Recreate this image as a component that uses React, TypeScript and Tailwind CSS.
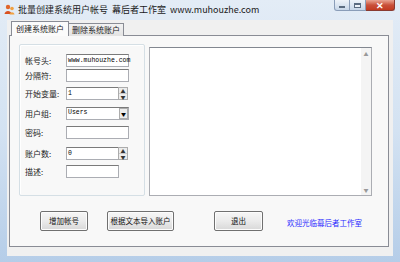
import { ReactNode } from "react";

const ui = { fontFamily: '"Noto Sans CJK SC", "Noto Sans", sans-serif' };
const mono = { fontFamily: '"Liberation Mono", "DejaVu Sans Mono", monospace' };

function Field({ className = "", value = "" }: { className?: string; value?: string }) {
  return (
    <div
      className={`h-[13px] bg-white border border-[#abadb3] border-t-[#7a7a7a] text-[6.5px] leading-[11px] pl-[1px] text-black ${className}`}
      style={mono}
    >
      {value}
    </div>
  );
}

function Spinner({ value }: { value: string }) {
  return (
    <div className="flex h-[13px] w-[63px]">
      <Field className="w-[53px]" value={value} />
      <div className="w-[10px] flex flex-col border border-[#acacac] bg-[#ececec] ml-[-1px]">
        <div className="flex-1 flex items-center justify-center text-[5px] leading-none text-[#333] border-b border-[#c8c8c8]">▲</div>
        <div className="flex-1 flex items-center justify-center text-[5px] leading-none text-[#333]">▼</div>
      </div>
    </div>
  );
}

function Row({ label, className, children }: { label: string; className: string; children: ReactNode }) {
  return (
    <div className={`flex items-center ${className}`}>
      <div className="w-[41px] text-[8px] leading-none text-[#222]">{label}</div>
      {children}
    </div>
  );
}

function Btn({ className, children }: { className: string; children: ReactNode }) {
  return (
    <div
      className={`h-[20px] flex items-center justify-center text-[7.5px] text-[#111] border border-[#707070] rounded-[2px] bg-gradient-to-b from-[#f6f6f6] via-[#ebebeb] to-[#d8d8d8] shadow-[inset_0_0_0_1px_#fcfcfc] ${className}`}
    >
      {children}
    </div>
  );
}

export default function App() {
  return (
    <div
      className="w-[400px] h-[262px] flex flex-col bg-gradient-to-b from-[#e3ecf6] via-[#d3e2f2] to-[#b5cde8] overflow-hidden"
      style={ui}
    >
      {/* title bar */}
      <div className="h-[20px] flex items-start relative">
        <svg className="mt-[4px] ml-[4px]" width="11" height="11" viewBox="0 0 11 11">
          <circle cx="4" cy="3" r="2.2" fill="#e0662c" />
          <path d="M0.5 10 C1 6 7 6 7.5 10 Z" fill="#d9501f" />
          <circle cx="8" cy="4.5" r="1.8" fill="#f0a040" />
          <path d="M5.5 10.5 C6 7.5 10 7.5 10.5 10.5 Z" fill="#f0a040" />
        </svg>
        <div className="ml-[3px] mt-[3px] text-[9px] leading-[14px] text-[#1a1a1a] whitespace-pre">
          批量创建系统用户帐号  幕后者工作室  www.muhouzhe.com
        </div>
        <div className="absolute right-[5px] top-0 flex">
          <div className="w-[16px] h-[11px] border border-[#8a9db8] border-t-0 rounded-bl-[3px] bg-gradient-to-b from-[#eef3f9] to-[#c7d6e8] flex items-end justify-center pb-[2px]">
            <div className="w-[6px] h-[2px] bg-white border border-[#5a6b80]" />
          </div>
          <div className="w-[16px] h-[11px] border border-[#8a9db8] border-t-0 border-l-0 bg-gradient-to-b from-[#eef3f9] to-[#c7d6e8] flex items-center justify-center">
            <div className="w-[7px] h-[5px] border border-[#5a6b80] border-t-2 bg-white/50" />
          </div>
          <div className="w-[29px] h-[11px] border border-[#8a3a30] border-t-0 border-l-0 rounded-br-[3px] bg-gradient-to-b from-[#e8a493] via-[#c9503a] to-[#c23a20] flex items-center justify-center text-white text-[9px] font-bold leading-none">
            ✕
          </div>
        </div>
      </div>

      {/* client area */}
      <div className="ml-[7px] w-[386px] h-[236px] bg-[#f0f0f0] relative">
        {/* tabs */}
        <div className="flex h-[16px] items-end pl-[4px] pt-[1px]">
          <div className="h-[15px] px-[4px] border border-[#898c95] border-b-0 bg-[#fbfbfb] text-[8px] leading-[14px] text-[#222] relative z-10">
            创建系统账户
          </div>
          <div className="h-[13px] px-[3px] border border-[#898c95] border-b-0 border-l-0 bg-gradient-to-b from-[#f2f2f2] to-[#e3e3e3] text-[8px] leading-[12px] text-[#222]">
            删除系统账户
          </div>
        </div>
        {/* panel */}
        <div className="ml-[2px] w-[380px] h-[212px] mt-[-1px] border border-[#898c95] bg-[#f8f8f8]">
          <div className="flex pl-[9px] pt-[8px]">
            {/* group box */}
            <div className="w-[126px] h-[152px] border border-[#d5dfe5] rounded-[2px] pl-[5px] shadow-[inset_1px_1px_0_#fff]">
              <Row label="帐号头:" className="mt-[9px]">
                <Field className="w-[63px]" value="www.muhouzhe.com" />
              </Row>
              <Row label="分隔符:" className="mt-[2px]">
                <Field className="w-[63px]" />
              </Row>
              <Row label="开始变量:" className="mt-[5px]">
                <Spinner value="1" />
              </Row>
              <Row label="用户组:" className="mt-[7px]">
                <div className="w-[63px] h-[13px] bg-white border border-[#abadb3] border-t-[#7a7a7a] flex items-center">
                  <div className="flex-1 text-[6.5px] leading-none pl-[1px]" style={mono}>Users</div>
                  <div className="w-[9px] h-[11px] border border-[#acacac] bg-[#ececec] flex items-center justify-center text-[5px] leading-none text-black">▼</div>
                </div>
              </Row>
              <Row label="密码:" className="mt-[6px]">
                <Field className="w-[63px]" />
              </Row>
              <Row label="账户数:" className="mt-[8px]">
                <Spinner value="0" />
              </Row>
              <Row label="描述:" className="mt-[5px]">
                <Field className="w-[53px]" />
              </Row>
            </div>
            {/* log box */}
            <div className="ml-[4px] mt-[3px] w-[223px] h-[149px] bg-white border border-[#abadb3] border-t-[#828790] flex justify-end">
              <div className="w-[10px] h-full bg-[#f4f4f4] flex flex-col justify-between items-center text-[5px] leading-none text-[#999] py-[3px]">
                <span>▲</span>
                <span>▼</span>
              </div>
            </div>
          </div>
          {/* buttons */}
          <div className="flex items-center mt-[15px]">
            <Btn className="ml-[30px] w-[48px]">增加帐号</Btn>
            <Btn className="ml-[19px] w-[67px]">根据文本导入账户</Btn>
            <Btn className="ml-[40px] w-[49px]">退出</Btn>
            <div className="ml-[24px] mt-[4px] text-[7.5px] text-[#2a2aff] leading-none">欢迎光临幕后者工作室</div>
          </div>
        </div>
      </div>
    </div>
  );
}
